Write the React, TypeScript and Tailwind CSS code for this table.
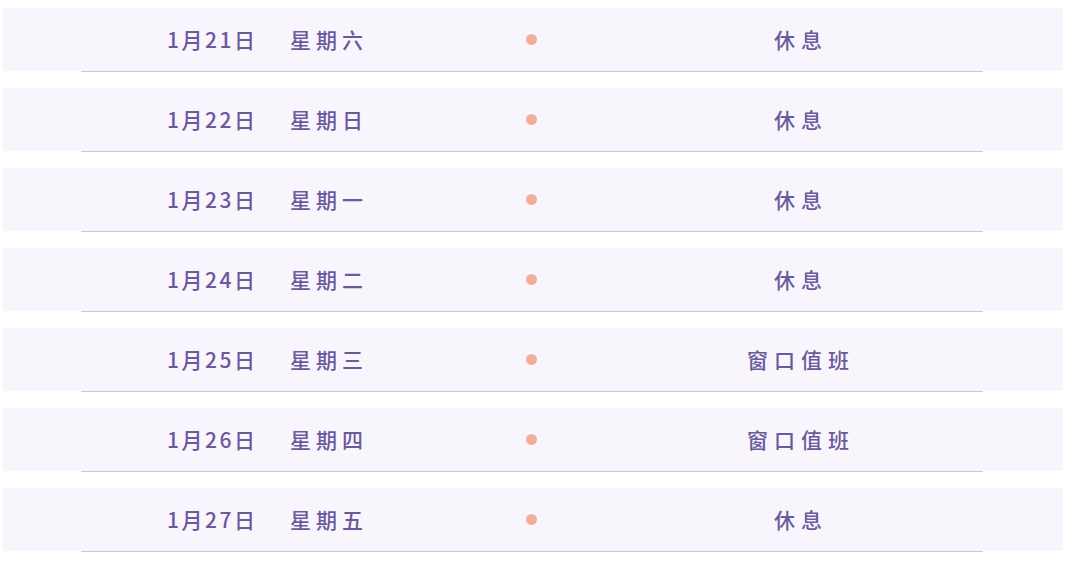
const rows = [
  { d: "1月21日", w: "星期六", s: "休息" },
  { d: "1月22日", w: "星期日", s: "休息" },
  { d: "1月23日", w: "星期一", s: "休息" },
  { d: "1月24日", w: "星期二", s: "休息" },
  { d: "1月25日", w: "星期三", s: "窗口值班" },
  { d: "1月26日", w: "星期四", s: "窗口值班" },
  { d: "1月27日", w: "星期五", s: "休息" },
];

export default function App() {
  return (
    <div
      className="w-[1080px] h-[562px] bg-white pt-[8px] overflow-hidden"
      style={{ fontFamily: '"Noto Sans CJK SC", "Noto Sans", sans-serif' }}
    >
      {rows.map((r) => (
        <div key={r.d} className="mb-[16px]">
          <div className="ml-[2px] w-[1061px] h-[63px] bg-[#f8f5fc] flex items-center text-[21px] font-medium text-[#6a5a9d] leading-none">
            <span className="pl-[165px] w-[288px] tracking-[2.5px]">{r.d}</span>
            <span className="w-[236px] tracking-[5px]">{r.w}</span>
            <span className="w-[11px] h-[11px] rounded-full bg-[#f2ae9b]" />
            <span className="ml-[4px] w-[520px] text-center tracking-[6px]">{r.s}</span>
          </div>
          <div className="ml-[81px] w-[902px] h-px bg-[#c3c5e6]" />
        </div>
      ))}
    </div>
  );
}
